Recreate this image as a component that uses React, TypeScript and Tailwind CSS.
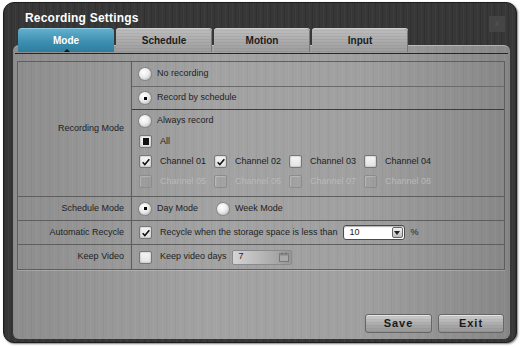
import React from 'react';

const FONT = "font-['Liberation_Sans',Arial,sans-serif]";

function Radio({ checked = false }: { checked?: boolean }) {
  return (
    <span className="w-[12px] h-[12px] shrink-0 rounded-full flex items-center justify-center bg-[radial-gradient(circle_at_40%_35%,#ffffff,#ececec_45%,#a9a9a9)] shadow-[0_0_0_1px_rgba(90,90,90,0.35)]">
      {checked && <span className="w-[3px] h-[3px] bg-black" />}
    </span>
  );
}

function Check({ state = 'off', disabled = false }: { state?: 'off' | 'on' | 'all'; disabled?: boolean }) {
  return (
    <span
      className={
        disabled
          ? 'w-[13px] h-[13px] shrink-0 rounded-[2px] border border-[#8c8c8c] bg-transparent shadow-[inset_1px_1px_1px_rgba(255,255,255,0.25)]'
          : 'w-[13px] h-[13px] shrink-0 rounded-[2px] border border-[#777] bg-[linear-gradient(#f6f6f6,#e3e3e3)] shadow-[inset_0_0_2px_rgba(0,0,0,0.35)] flex items-center justify-center'
      }
    >
      {state === 'on' && (
        <svg viewBox="0 0 12 12" className="w-[10px] h-[10px]">
          <path d="M2 6.2 L4.6 9 L10 2.6" fill="none" stroke="#111" strokeWidth="1.9" />
        </svg>
      )}
      {state === 'all' && <span className="w-[6px] h-[7px] bg-[#111]" />}
    </span>
  );
}

const channels = [
  { name: 'Channel 01', on: true },
  { name: 'Channel 02', on: true },
  { name: 'Channel 03', on: false },
  { name: 'Channel 04', on: false },
];
const disabledChannels = ['Channel 05', 'Channel 06', 'Channel 07', 'Channel 08'];
const tabs = ['Mode', 'Schedule', 'Motion', 'Input'];

export default function App() {
  return (
    <div className={`w-[521px] h-[347px] bg-white pt-[2px] pl-[3px] ${FONT}`}>
      {/* window */}
      <div className="relative w-[514px] h-[341px] rounded-[11px] border border-[#1e1e1e] bg-[#373737] bg-[image:repeating-linear-gradient(90deg,rgba(0,0,0,0.12)_0_1px,transparent_1px_4px,rgba(255,255,255,0.03)_4px_5px,transparent_5px_7px)] flex flex-col shadow-[1px_1px_2px_rgba(0,0,0,0.5)]">
        <div className="h-[25px] pt-[4px] pl-[21px] flex items-center">
          <span className="text-[12px] font-bold text-white tracking-[0.2px]">Recording Settings</span>
        </div>
        <div className="absolute top-[13px] right-[11px] w-[16px] h-[16px] bg-[#454545] flex items-center justify-center text-[9px] text-[#555]">x</div>

        {/* tabs */}
        <div className="relative z-10 h-[24px] flex gap-[2px] pl-[14px]">
          {tabs.map((t, i) => (
            <div
              key={t}
              className={
                i === 0
                  ? 'relative w-[96px] h-[24px] rounded-t-[4px] border-t border-[#8fcbe3] bg-[linear-gradient(#62aecd,#3d90b1_55%,#2e7d9d)] flex items-center justify-center text-[10px] font-bold text-white'
                  : 'w-[96px] h-[24px] rounded-t-[3px] border-t border-[#cfcfcf] bg-[#a9a9a9] bg-[image:repeating-linear-gradient(0deg,rgba(0,0,0,0.05)_0_1px,transparent_1px_3px),linear-gradient(#bdbdbd,#9c9c9c)] flex items-center justify-center text-[10px] font-bold text-[#1c1c1c] shadow-[inset_-1px_0_0_#777]'
              }
            >
              {t}
              {i === 0 && (
                <span className="absolute bottom-0 left-[46px] w-0 h-0 border-l-[3px] border-r-[3px] border-b-[3px] border-l-transparent border-r-transparent border-b-[#111]" />
              )}
            </div>
          ))}
        </div>

        {/* panel */}
        <div className="-mt-[7px] ml-[9px] w-[497px] h-[294px] rounded-[6px] bg-[#999] bg-[image:repeating-linear-gradient(90deg,rgba(0,0,0,0.035)_0_1px,transparent_1px_5px,rgba(255,255,255,0.04)_5px_6px,transparent_6px_9px),linear-gradient(90deg,#8d8d8d,#a3a3a3_40%,#a0a0a0_70%,#878787)] flex flex-col shadow-[inset_0_1px_0_rgba(255,255,255,0.35)]">
          <div className="h-[9px] mx-[2px] border-b border-[#262626]" />

          {/* table */}
          <div className="mt-[7px] ml-[4px] w-[488px] border border-[#5e5e5e] text-[9px] text-[#1e1e1e] shadow-[0_1px_0_rgba(255,255,255,0.2)]">
            {/* Recording Mode */}
            <div className="flex border-b border-[#5e5e5e]">
              <div className="w-[114px] shrink-0 border-r border-[#5e5e5e] flex items-center justify-end pr-[7px]">
                Recording Mode
              </div>
              <div className="flex-1 flex flex-col">
                <div className="h-[25px] border-b border-[#6a6a6a] flex items-center pl-[7px] gap-[6px]">
                  <Radio />
                  <span>No recording</span>
                </div>
                <div className="h-[23px] border-b border-[#3c3c3c] flex items-center pl-[7px] gap-[6px]">
                  <Radio checked />
                  <span>Record by schedule</span>
                </div>
                <div className="h-[86px] flex flex-col pt-[5px] pl-[7px]">
                  <div className="h-[12px] flex items-center gap-[6px]">
                    <Radio />
                    <span>Always record</span>
                  </div>
                  <div className="mt-[8px] h-[13px] flex items-center gap-[8px]">
                    <Check state="all" />
                    <span>All</span>
                  </div>
                  <div className="mt-[7px] h-[13px] flex">
                    {channels.map((c) => (
                      <div key={c.name} className="w-[75px] flex items-center gap-[8px]">
                        <Check state={c.on ? 'on' : 'off'} />
                        <span>{c.name}</span>
                      </div>
                    ))}
                  </div>
                  <div className="mt-[7px] h-[13px] flex">
                    {disabledChannels.map((c) => (
                      <div key={c} className="w-[75px] flex items-center gap-[8px]">
                        <Check disabled />
                        <span className="text-[#b9b9b9]">{c}</span>
                      </div>
                    ))}
                  </div>
                </div>
              </div>
            </div>

            {/* Schedule Mode */}
            <div className="h-[24px] flex border-b border-[#5e5e5e]">
              <div className="w-[114px] shrink-0 border-r border-[#5e5e5e] flex items-center justify-end pr-[7px]">
                Schedule Mode
              </div>
              <div className="flex-1 flex items-center pl-[7px]">
                <Radio checked />
                <span className="ml-[6px] w-[60px]">Day Mode</span>
                <Radio />
                <span className="ml-[6px]">Week Mode</span>
              </div>
            </div>

            {/* Automatic Recycle */}
            <div className="h-[24px] flex border-b border-[#5e5e5e]">
              <div className="w-[114px] shrink-0 border-r border-[#5e5e5e] flex items-center justify-end pr-[7px]">
                Automatic Recycle
              </div>
              <div className="flex-1 flex items-center pl-[7px]">
                <Check state="on" />
                <span className="ml-[8px]">Recycle when the storage space is less than</span>
                <div className="ml-[5px] w-[62px] h-[15px] rounded-[3px] border border-[#4a4a4a] bg-white shadow-[inset_0_1px_1px_rgba(0,0,0,0.3)] flex items-center justify-between pl-[6px] pr-[1px]">
                  <span>10</span>
                  <span className="w-[11px] h-[11px] rounded-[2px] border border-[#666] bg-[linear-gradient(#f2f2f2,#bdbdbd)] flex items-center justify-center">
                    <span className="w-0 h-0 border-l-[3px] border-r-[3px] border-t-[4px] border-l-transparent border-r-transparent border-t-[#222]" />
                  </span>
                </div>
                <span className="ml-[6px]">%</span>
              </div>
            </div>

            {/* Keep Video */}
            <div className="h-[24px] flex">
              <div className="w-[114px] shrink-0 border-r border-[#5e5e5e] flex items-center justify-end pr-[7px]">
                Keep Video
              </div>
              <div className="flex-1 flex items-center pl-[7px]">
                <Check />
                <span className="ml-[8px]">Keep video days</span>
                <div className="ml-[5px] w-[60px] h-[15px] rounded-[2px] border border-[#8a8a8a] bg-[linear-gradient(90deg,#d4d4d4,#b0b0b0_60%,#969696)] flex items-center justify-between pl-[6px] pr-[2px]">
                  <span>7</span>
                  <svg viewBox="0 0 10 10" className="w-[10px] h-[10px]">
                    <rect x="0.5" y="1.5" width="9" height="8" fill="#a9a9a9" stroke="#777" />
                    <rect x="0.5" y="1.5" width="9" height="2" fill="#8a8a8a" />
                    <path d="M3 0.5 V2.5 M7 0.5 V2.5" stroke="#666" />
                  </svg>
                </div>
              </div>
            </div>
          </div>

          {/* buttons */}
          <div className="mt-auto mb-[6px] mr-[6px] flex justify-end gap-[6px]">
            <button className="w-[67px] h-[19px] rounded-[3px] border border-[#666] bg-[image:repeating-linear-gradient(0deg,rgba(0,0,0,0.04)_0_1px,transparent_1px_3px),linear-gradient(#cfcfcf,#a8a8a8_60%,#979797)] text-[11px] font-bold tracking-[1px] text-[#1a1a1a] shadow-[inset_0_1px_0_rgba(255,255,255,0.5)]">
              Save
            </button>
            <button className="w-[66px] h-[19px] rounded-[3px] border border-[#666] bg-[image:repeating-linear-gradient(0deg,rgba(0,0,0,0.04)_0_1px,transparent_1px_3px),linear-gradient(#cfcfcf,#a8a8a8_60%,#979797)] text-[11px] font-bold tracking-[1px] text-[#1a1a1a] shadow-[inset_0_1px_0_rgba(255,255,255,0.5)]">
              Exit
            </button>
          </div>
        </div>
      </div>
    </div>
  );
}
